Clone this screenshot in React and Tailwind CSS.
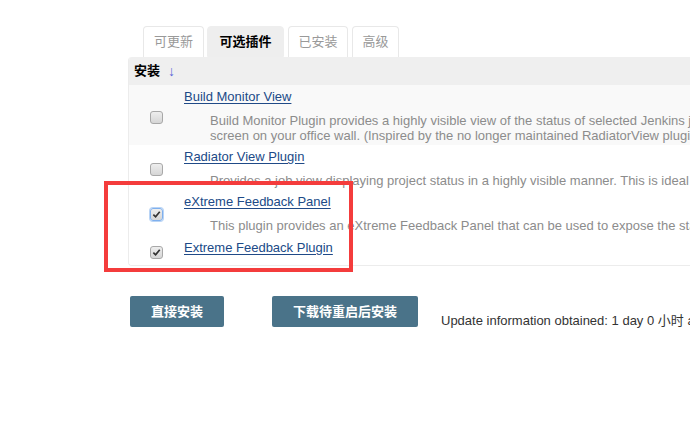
import React from 'react'

const FONT = { fontFamily: '"Liberation Sans", Arial, "Noto Sans CJK SC", sans-serif' }

const PLUGINS = [
  {
    name: 'Build Monitor View',
    lines: [
      'Build Monitor Plugin provides a highly visible view of the status of selected Jenkins jobs. It easily accommodates different computer screen sizes and is ideal as an Extreme Feedback Device to be displayed on a big',
      'screen on your office wall. (Inspired by the no longer maintained RadiatorView plugin).',
    ],
    shaded: true,
  },
  {
    name: 'Radiator View Plugin',
    lines: ['Provides a job view displaying project status in a highly visible manner. This is ideal for displaying on a screen on the office wall as a form of Extreme Feedback.'],
  },
  {
    name: 'eXtreme Feedback Panel',
    lines: ['This plugin provides an eXtreme Feedback Panel that can be used to expose the status of a selected number of Jobs.'],
    checked: true,
    focused: true,
  },
  {
    name: 'Extreme Feedback Plugin',
    lines: [],
    checked: true,
  },
]

const TABS = [
  { label: '可更新', width: 'w-[61px]' },
  { label: '可选插件', width: 'w-[77px]', active: true },
  { label: '已安装', width: 'w-[60px]' },
  { label: '高级', width: 'w-[47px]' },
]

function Checkbox({ checked, focused }) {
  return (
    <span
      className={`grid size-[13px] place-items-center rounded-[3px] border bg-gradient-to-b from-[#eeeeee] to-[#d6d6d6] ${
        focused ? 'border-[#7fb0ee] shadow-[0_0_0_1px_#b9d4f5]' : 'border-[#a8a8a8]'
      }`}
    >
      {checked ? (
        <svg viewBox="0 0 10 10" className="size-[9px]" aria-hidden="true">
          <path d="M1.5 5.2 L4 7.6 L8.6 2" fill="none" stroke="#333" strokeWidth="1.9" />
        </svg>
      ) : null}
    </span>
  )
}

function PluginRow({ plugin, last }) {
  return (
    <div className={`flex ${plugin.shaded ? 'bg-[#f9f9f9]' : 'bg-white'}`}>
      <div className="flex w-[55px] shrink-0 items-center justify-center pt-1">
        <Checkbox checked={plugin.checked} focused={plugin.focused} />
      </div>
      <div className={`pt-1 ${last ? 'pb-[9px] pt-[5px]' : 'pb-[2px]'}`}>
        <a className="block text-[13px] leading-4 text-[#204a87] underline underline-offset-2">
          {plugin.name}
        </a>
        {plugin.lines.length ? (
          <div className="mt-2 pl-[26px] text-[13px] leading-[15px] text-[#8c8c8c]">
            {plugin.lines.map((line) => (
              <div key={line} className="whitespace-nowrap">{line}</div>
            ))}
          </div>
        ) : null}
      </div>
    </div>
  )
}

export default function App() {
  return (
    <div className="relative h-[422px] w-[690px] overflow-hidden bg-white" style={FONT}>
      <div className="pl-[128px] pt-[26px]">
        <div className="ml-[15px] flex items-end gap-[3px]">
          {TABS.map((tab, index) => (
            <div
              key={tab.label}
              className={`flex h-[31px] ${tab.width} ${index > 1 ? 'ml-[1px]' : ''} items-center justify-center rounded-t-[4px] border text-[13px] ${
                tab.active
                  ? 'border-[#eeeeee] bg-[#eeeeee] font-bold text-black'
                  : 'border-[#e8e8e8] border-b-0 bg-white text-[#999]'
              }`}
            >
              {tab.label}
            </div>
          ))}
        </div>

        <div className="w-[700px] overflow-hidden rounded-[4px] border-b border-l border-[#ececec]">
          <div className="flex h-[28px] items-center bg-[#efefef] pl-[5px] text-[13px]">
            <span className="font-bold text-black">安装</span>
            <span className="ml-[8px] text-[14px] text-[#5766d8]">↓</span>
          </div>
          {PLUGINS.map((plugin, index) => (
            <PluginRow key={plugin.name} plugin={plugin} last={index === PLUGINS.length - 1} />
          ))}
        </div>

        <div className="ml-[2px] mt-[30px] flex items-start">
          <button className="h-[31px] w-[94px] shrink-0 rounded-[2px] bg-[#4a7389] text-[13px] font-bold text-white">
            直接安装
          </button>
          <button className="ml-[48px] h-[31px] w-[146px] shrink-0 rounded-[2px] bg-[#4a7389] text-[13px] font-bold text-white">
            下载待重启后安装
          </button>
          <span className="ml-[23px] mt-[15px] whitespace-nowrap text-[13px] text-[#333]">
            Update information obtained: 1 day 0 小时 ago
          </span>
        </div>
      </div>

      <div className="pointer-events-none absolute left-[104px] top-[181px] h-[91px] w-[249px] border-4 border-[#f43c3c]" />
    </div>
  )
}
